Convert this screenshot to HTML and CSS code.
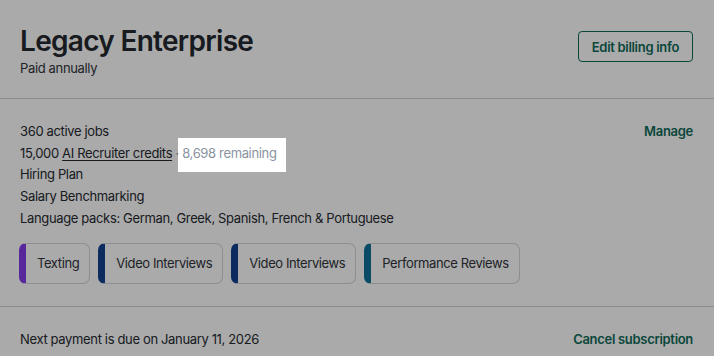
FILE: index.html
```html
<!DOCTYPE html>
<html lang="en">
<head>
  <meta charset="UTF-8">
  <meta name="viewport" content="width=device-width, initial-scale=1.0">
  <title>Subscription</title>
  <link rel="stylesheet" href="styles.css">
</head>
<body>
<div class="card">
  <div class="section header">
    <div>
      <h2 class="plan-name">Legacy Enterprise</h2>
      <div class="plan-cycle">Paid annually</div>
    </div>
    <button class="btn-outline">Edit billing info</button>
  </div>

  <div class="section">
    <div class="features">
      <ul class="feature-list">
        <li>360 active jobs</li>
        <li>15,000 <a href="#" class="link">AI Recruiter credits</a> <span class="muted">·</span> <span class="remaining spotlight">8,698 remaining</span></li>
        <li>Hiring Plan</li>
        <li>Salary Benchmarking</li>
        <li>Language packs: German, Greek, Spanish, French &amp; Portuguese</li>
      </ul>
      <a href="#" class="action">Manage</a>
    </div>
    <div class="addons">
      <div class="addon addon-purple">Texting</div>
      <div class="addon addon-navy">Video Interviews</div>
      <div class="addon addon-navy">Video Interviews</div>
      <div class="addon addon-teal">Performance Reviews</div>
    </div>
  </div>

  <div class="section footer">
    <span>Next payment is due on January 11, 2026</span>
    <a href="#" class="action">Cancel subscription</a>
  </div>
</div>
</body>
</html>
```

FILE: styles.css
```css
body {
  font-family: 'Inter', 'Noto Sans', sans-serif;
  margin: 0;
  background: #fff;
  color: #262a31;
  letter-spacing: -0.35px;
  overflow: hidden;
}
.card {
  background: #fff;
}
.section {
  padding: 22px 21px 22px 20px;
  border-bottom: 1px solid #d2d4d8;
}
.header {
  display: flex;
  justify-content: space-between;
  align-items: flex-start;
  padding-top: 24px;
  padding-bottom: 20px;
}
.plan-name {
  margin: 0;
  font-size: 28px;
  font-weight: 600;
  line-height: 34px;
  letter-spacing: -0.7px;
  color: #23272e;
}
.plan-cycle {
  margin-top: 1px;
  font-size: 13px;
  line-height: 19px;
  color: #30343b;
}
.btn-outline {
  margin-top: 7px;
  height: 31px;
  padding: 0 13px;
  background: #fff;
  border: 1px solid #0f6b59;
  border-radius: 4px;
  color: #0f6b59;
  font-family: inherit;
  font-size: 13px;
  font-weight: 600;
  letter-spacing: -0.3px;
  cursor: pointer;
}
.features {
  display: flex;
  justify-content: space-between;
  align-items: flex-start;
}
.feature-list {
  list-style: none;
  margin: 0;
  padding: 0;
  font-size: 13px;
  line-height: 21.7px;
}
.link {
  color: inherit;
  text-decoration: underline;
  text-underline-offset: 2px;
}
.muted {
  color: #8a93a2;
}
.remaining {
  color: #8a93a2;
}
.spotlight {
  position: relative;
}
.spotlight::after {
  content: "";
  position: absolute;
  top: -7px;
  bottom: -11px;
  left: -4px;
  right: -9px;
  box-shadow: 0 0 0 2000px rgba(0, 0, 0, 0.335);
  pointer-events: none;
}
.action {
  color: #0f6b59;
  font-size: 13px;
  font-weight: 600;
  letter-spacing: -0.3px;
  text-decoration: none;
  line-height: 21.7px;
}
.addons {
  display: flex;
  gap: 8px;
  margin-top: 13px;
  margin-left: -1px;
}
.addon {
  height: 41px;
  box-sizing: border-box;
  display: flex;
  align-items: center;
  padding: 0 10px 0 11px;
  border: 1px solid #d4d6db;
  border-left: 7px solid;
  border-radius: 7px;
  font-size: 13px;
  letter-spacing: -0.4px;
  color: #30343b;
}
.addon-purple {
  border-left-color: #843bea;
}
.addon-navy {
  border-left-color: #12418f;
}
.addon-teal {
  border-left-color: #117199;
}
.footer {
  display: flex;
  justify-content: space-between;
  align-items: center;
  font-size: 13px;
  border-bottom: none;
}
```
